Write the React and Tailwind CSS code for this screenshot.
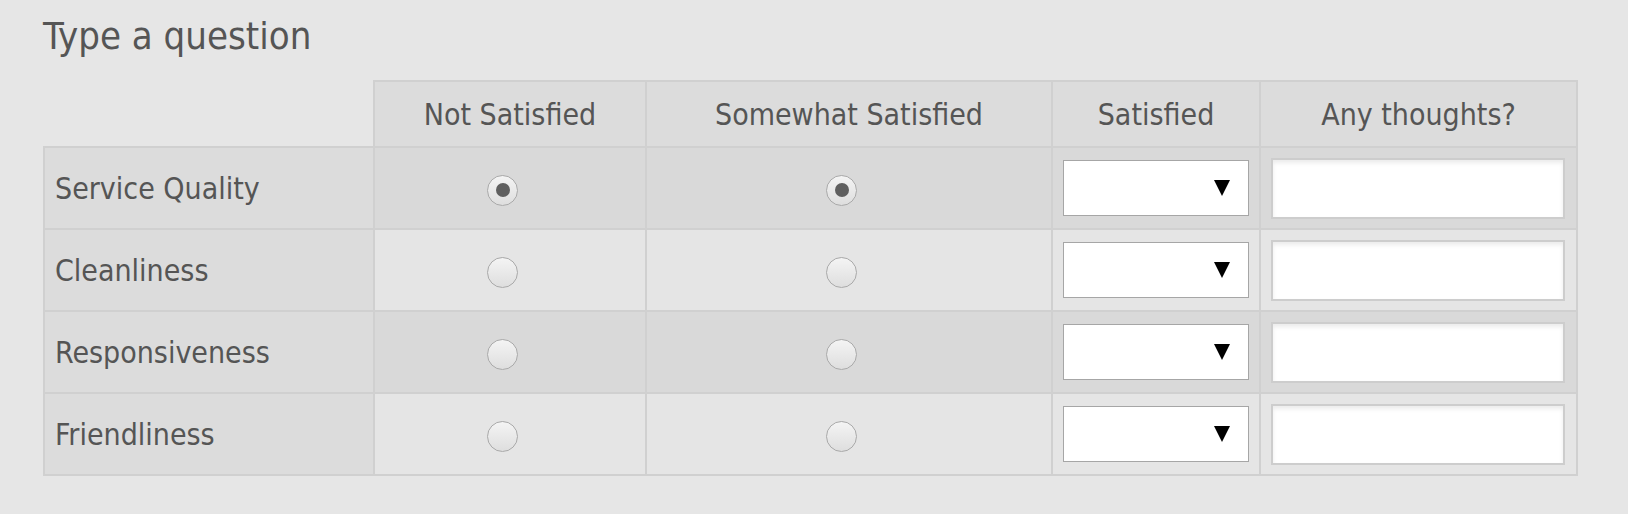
import React from "react";

const rows = [
  { label: "Service Quality", checked: true },
  { label: "Cleanliness", checked: false },
  { label: "Responsiveness", checked: false },
  { label: "Friendliness", checked: false },
];

function Radio({ checked }) {
  return (
    <span className="inline-flex items-center justify-center w-[31px] h-[31px] rounded-full border-[1.5px] border-[#a9a9a9] bg-gradient-to-b from-[#f4f4f4] to-[#dedede] mr-[15px] align-middle">
      {checked ? <span className="block w-[14px] h-[14px] rounded-full bg-[#5f5f5f]" /> : null}
    </span>
  );
}

function Select() {
  return (
    <div className="w-[186px] h-[56px] bg-white border border-[#a6a6a6] flex items-center justify-end pr-[18px]">
      <svg width="16" height="16" viewBox="0 0 16 16">
        <polygon points="0,0 16,0 8,16" fill="#000" />
      </svg>
    </div>
  );
}

function TextBox() {
  return (
    <div className="w-[294px] h-[61px] bg-white border-2 border-[#cdcdcd] shadow-[inset_0_3px_4px_rgba(0,0,0,0.08)]" />
  );
}

export default function App() {
  return (
    <div
      className="w-[1628px] h-[514px] bg-[#e6e6e6] text-[#555555] pl-[43px] pt-[8px]"
      style={{ fontFamily: '"DejaVu Sans Condensed", "DejaVu Sans", sans-serif' }}
    >
      <h1 className="text-[38px] leading-[56px] font-normal">Type a question</h1>
      <table className="mt-[16px] border-collapse table-fixed w-[1533px] text-[30px]">
        <colgroup>
          <col className="w-[330px]" />
          <col className="w-[272px]" />
          <col className="w-[406px]" />
          <col className="w-[208px]" />
          <col className="w-[317px]" />
        </colgroup>
        <thead>
          <tr className="h-[66px]">
            <th className="border-0" />
            {["Not Satisfied", "Somewhat Satisfied", "Satisfied", "Any thoughts?"].map((h) => (
              <th key={h} className="font-normal bg-[#dcdcdc] border-2 border-[#d0d0d0] text-center">
                {h}
              </th>
            ))}
          </tr>
        </thead>
        <tbody>
          {rows.map((r, i) => {
            const bg = i % 2 === 0 ? "bg-[#d9d9d9]" : "bg-[#e5e5e5]";
            return (
              <tr key={r.label} className="h-[82px]">
                <td className="bg-[#dcdcdc] border-2 border-[#d0d0d0] pl-[10px] text-left">{r.label}</td>
                <td className={`${bg} border-2 border-[#d0d0d0] text-center`}>
                  <Radio checked={r.checked} />
                </td>
                <td className={`${bg} border-2 border-[#d0d0d0] text-center`}>
                  <Radio checked={r.checked} />
                </td>
                <td className={`${bg} border-2 border-[#d0d0d0] pl-[10px]`}>
                  <Select />
                </td>
                <td className={`${bg} border-2 border-[#d0d0d0] pl-[10px]`}>
                  <TextBox />
                </td>
              </tr>
            );
          })}
        </tbody>
      </table>
    </div>
  );
}
